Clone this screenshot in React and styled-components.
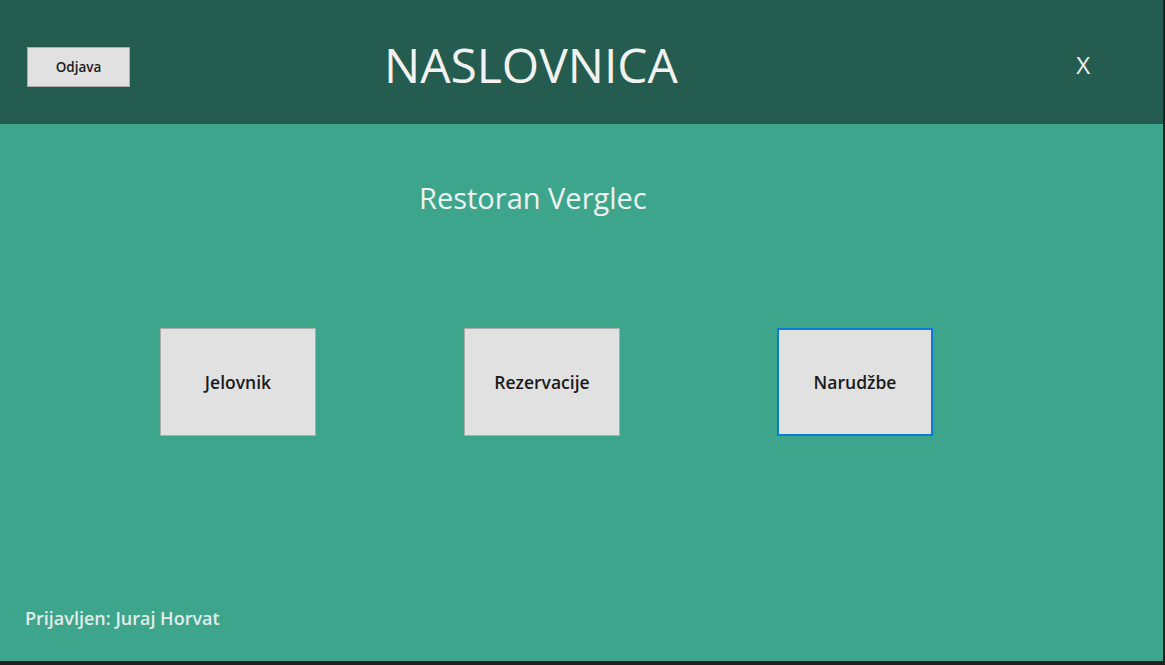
import React from 'react';
import styled, { createGlobalStyle } from 'styled-components';

const GlobalStyle = createGlobalStyle`
  html, body {
    margin: 0;
    padding: 0;
    background-color: #1f1f1f;
  }
  body {
    width: 1165px;
    height: 665px;
    overflow: hidden;
    font-family: "Open Sans", "Noto Sans", sans-serif;
  }
`;

const Window = styled.div`
  width: 1163px;
  height: 661px;
  display: flex;
  flex-direction: column;
  background-color: #3ea58d;
`;

const Header = styled.div`
  height: 124px;
  flex-shrink: 0;
  display: flex;
  align-items: flex-start;
  background-color: #245c50;
`;

const LogoutButton = styled.button`
  margin: 47px 0 0 27px;
  width: 103px;
  height: 40px;
  box-sizing: border-box;
  border: 1px solid #adadad;
  background-color: #e1e1e1;
  color: #1a1a1a;
  font-family: "Open Sans", "Noto Sans", sans-serif;
  font-size: 13.5px;
  font-weight: 600;
  padding: 0;
`;

const PageTitle = styled.h1`
  margin: 33px 0 0 254px;
  font-size: 48px;
  font-weight: 500;
  line-height: 64px;
  color: #f2f2f2;
`;

const CloseLabel = styled.span`
  margin: 48px 73px 0 auto;
  font-size: 24px;
  line-height: 34px;
  color: #f2f2f2;
`;

const Content = styled.div`
  flex: 1;
  display: flex;
  flex-direction: column;
`;

const RestaurantName = styled.h2`
  margin: 52px 0 0 419px;
  font-size: 29px;
  font-weight: 500;
  line-height: 44px;
  color: #eef2f0;
`;

const MenuRow = styled.div`
  display: flex;
  margin: 108px 0 0 160px;
`;

const MenuButton = styled.button`
  width: 156px;
  height: 108px;
  margin-left: ${props => props.offset || 0}px;
  box-sizing: border-box;
  border: ${props => props.focused ? '2px solid #0a7ad8' : '1px solid #adadad'};
  background-color: #e1e1e1;
  color: #1a1a1a;
  font-family: "Open Sans", "Noto Sans", sans-serif;
  font-size: 17.5px;
  font-weight: 600;
  padding: 0;
`;

const Footer = styled.div`
  margin: auto 0 31px 25px;
  font-size: 18px;
  font-weight: 600;
  color: #e4ece9;
`;

export default function App() {
  return (
    <>
      <GlobalStyle />
      <Window>
        <Header>
          <LogoutButton>Odjava</LogoutButton>
          <PageTitle>NASLOVNICA</PageTitle>
          <CloseLabel>X</CloseLabel>
        </Header>
        <Content>
          <RestaurantName>Restoran Verglec</RestaurantName>
          <MenuRow>
            <MenuButton>Jelovnik</MenuButton>
            <MenuButton offset={148}>Rezervacije</MenuButton>
            <MenuButton offset={157} focused>Narudžbe</MenuButton>
          </MenuRow>
          <Footer>Prijavljen: Juraj Horvat</Footer>
        </Content>
      </Window>
    </>
  );
}
